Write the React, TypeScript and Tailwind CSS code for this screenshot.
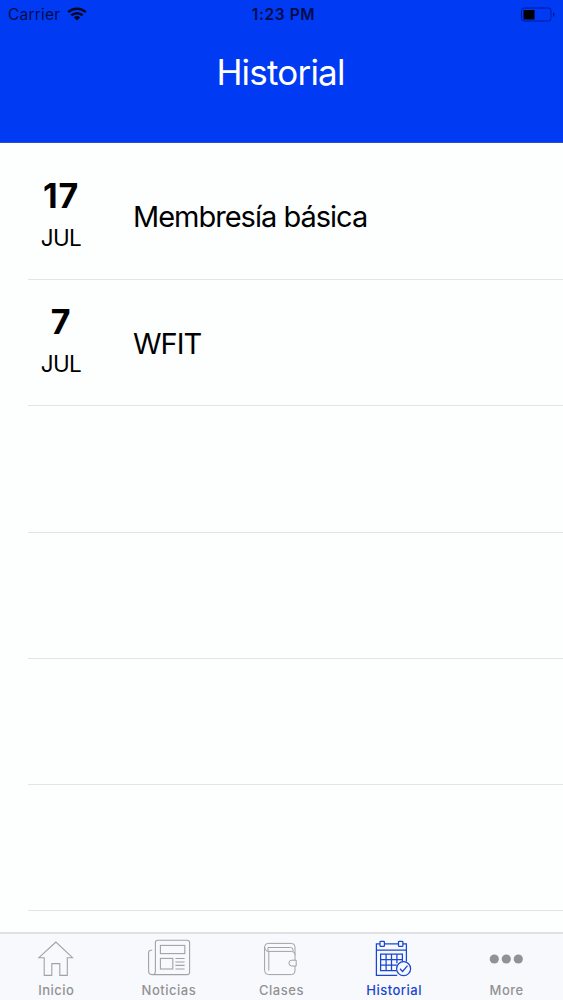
import type { ReactNode } from "react";

interface HistoryItem {
  day?: string;
  month?: string;
  title?: string;
}

interface TabItem {
  label: string;
  icon: ReactNode;
  active?: boolean;
}

const items: HistoryItem[] = [
  { day: "17", month: "JUL", title: "Membresía básica" },
  { day: "7", month: "JUL", title: "WFIT" },
  {},
  {},
  {},
  {},
];

function HomeIcon() {
  return (
    <svg className="h-10 w-11 text-[#a2a2a5]" viewBox="0 0 44 40" fill="none" stroke="currentColor" strokeWidth="1.1">
      <path d="M21.9 5 4.9 20.7h5.3v17.7h7.6V26.6h8v11.8h7.5V20.7h5.2z" />
    </svg>
  );
}

function NewsIcon() {
  return (
    <svg className="h-10 w-11 text-[#a2a2a5]" viewBox="0 0 44 40" fill="none" stroke="currentColor" strokeWidth="1.1">
      <path d="M8.4 34.4V5.6Q8.4 3.2 10.8 3.2h29.4q2.4 0 2.4 2.4v29.6q0 2.4-2.4 2.4H5Q1.6 37.4 1.6 34V15.6q0-2.4 2.4-2.4h1.2M8.4 34.2q0 3.4-3.4 3.4" />
      <rect x="13.4" y="8.4" width="24.4" height="8.2" />
      <rect x="13.4" y="21.4" width="12.4" height="10.6" />
      <path d="M28.4 21.5h9.2M28.4 25h9.2M28.4 28.4h9.2M28.4 32h9.2" />
    </svg>
  );
}

function WalletIcon() {
  return (
    <svg className="h-10 w-11 text-[#a2a2a5]" viewBox="0 0 44 40" fill="none" stroke="currentColor" strokeWidth="1">
      <path d="M36 23.3V10q0-3.6-3.6-3.6H9.2q-3.6 0-3.6 3.6v23.6q0 4 4 4h22.8q3.6 0 3.6-3.6v-5" />
      <path d="M5.6 10q.4 4.4 4 4.4h22.8q3.6 0 3.6 3.4M9 14.4v-3.9h22.6q2.4 0 2.4 2.4v1.6M9.8 14.4v19.2" />
      <path d="M37.2 23.2h-4.4a2.9 2.9 0 0 0 0 5.8h4.4z" />
    </svg>
  );
}

function CalendarIcon() {
  return (
    <svg className="h-10 w-11" viewBox="0 0 44 40" fill="none" stroke="currentColor" strokeWidth="1.25">
      <path d="M7.9 6.8H4.4v31.6h20.8M12.5 6.8h14M30.9 6.8h3.5v17.6M4.4 13.2h30" />
      <rect x="8" y="4.4" width="4.4" height="5" rx=".7" />
      <rect x="26.5" y="4.4" width="4.4" height="5" rx=".7" />
      <path d="M24.4 33.7H8.6V17h21.8v7.6M14.1 17v16.7M19.5 17v16.7M24.9 17v9.2M8.6 22.6h21.8M8.6 28.2h16.2" />
      <circle cx="31.6" cy="31.7" r="7" />
      <path d="m28 31.8 2.6 2.7 4.9-5.9" />
    </svg>
  );
}

function MoreIcon() {
  return (
    <svg className="h-10 w-11" viewBox="0 0 44 40" fill="currentColor">
      <circle cx="9.3" cy="22" r="4.6" />
      <circle cx="21.3" cy="22" r="4.6" />
      <circle cx="33.3" cy="22" r="4.6" />
    </svg>
  );
}

const tabs: TabItem[] = [
  { label: "Inicio", icon: <HomeIcon /> },
  { label: "Noticias", icon: <NewsIcon /> },
  { label: "Clases", icon: <WalletIcon /> },
  { label: "Historial", icon: <CalendarIcon />, active: true },
  { label: "More", icon: <MoreIcon /> },
];

function StatusBar() {
  return (
    <div className="grid h-7 grid-cols-3 items-center pr-2 pl-2 text-[#000b4a]">
      <div className="flex items-center gap-[7px]">
        <span className="pt-[2px] text-[15.5px] leading-none tracking-[0.2px]">Carrier</span>
        <svg className="h-[14px] w-5" viewBox="0 0 20 14" fill="none" stroke="#000626" strokeWidth="2.5">
          <path d="M1.2 5.2a12.8 12.8 0 0 1 17.6 0M4.4 8.4a8.2 8.2 0 0 1 11.2 0" />
          <path d="M10 13.6 6.8 10.5a4.7 4.7 0 0 1 6.4 0z" fill="#000626" stroke="none" />
        </svg>
      </div>
      <span className="pt-[2px] pl-[4px] text-center text-[15.5px] leading-none font-semibold tracking-[0.6px]">
        1:23 PM
      </span>
      <svg className="ml-auto h-[15px] w-[35px]" viewBox="0 0 35 15" fill="none">
        <rect x="1.5" y="1" width="29.5" height="13" rx="2.5" stroke="#0018a0" />
        <rect x="3.5" y="3" width="11" height="9.5" fill="#000" />
        <path d="M33 5v5q1.6-.8 1.6-2.5T33 5" fill="#0018a0" />
      </svg>
    </div>
  );
}

export default function App() {
  return (
    <div className="flex h-[1000px] w-[563px] flex-col overflow-hidden bg-[#fdfefe] font-['Inter','Liberation_Sans',sans-serif]">
      <header className="h-[143px] shrink-0 border-b border-[#2a50c8] bg-[#003bf3]">
        <StatusBar />
        <h1 className="mt-[22px] pr-0.5 text-center text-[35px] leading-[44px] font-normal tracking-[-0.8px] text-white">
          Historial
        </h1>
      </header>

      <main className="min-h-0 flex-1 overflow-hidden pt-[10.7px] pl-7">
        {items.map((item, index) => (
          <div key={index} className="flex h-[126.3px] items-center border-b border-[#e3e4e5] text-black">
            <div className="flex w-[66px] flex-col items-center">
              <span className="text-[34px] leading-[42px] font-bold tracking-[0.8px]">{item.day}</span>
              <span className="text-[22.5px] leading-[41px] tracking-[-0.6px]">{item.month}</span>
            </div>
            <span className="ml-[39px] pt-0.5 text-[29px] leading-9 tracking-[-1px]">{item.title}</span>
          </div>
        ))}
      </main>

      <nav className="grid h-[68px] shrink-0 grid-cols-5 border-t-2 border-[#dfe1e4] bg-[#f8f9fc]">
        {tabs.map((tab) => (
          <div
            key={tab.label}
            className={`flex flex-col items-center pt-[3px] ${tab.active ? "text-[#1746d1]" : "text-[#929295]"}`}
          >
            {tab.icon}
            <span className="mt-1 text-[13px] leading-[18px] font-medium tracking-[0.5px]">{tab.label}</span>
          </div>
        ))}
      </nav>
    </div>
  );
}
